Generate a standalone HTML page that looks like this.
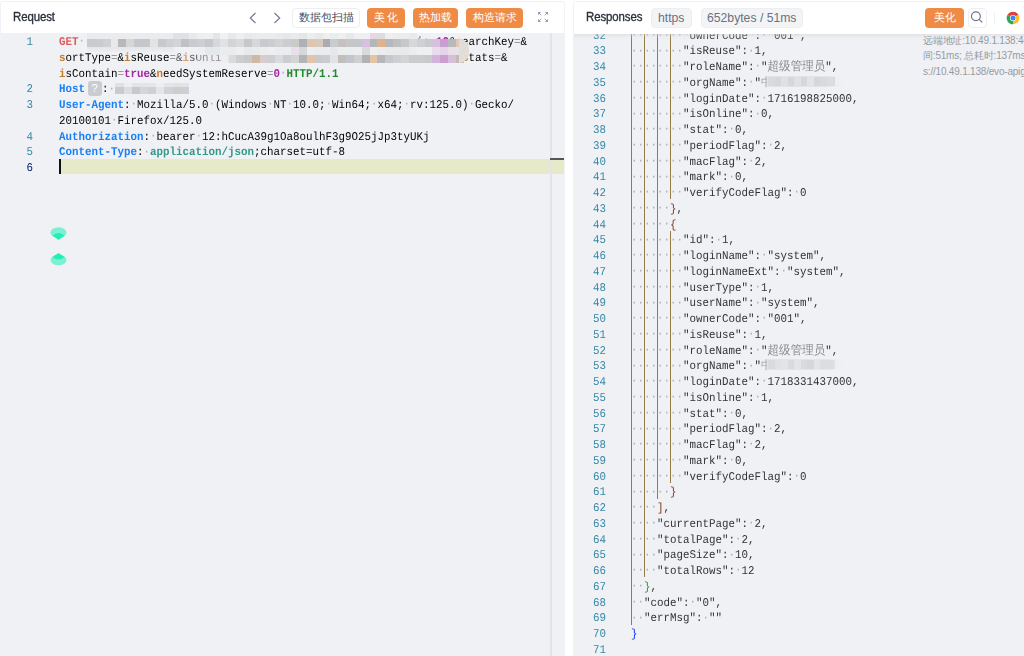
<!DOCTYPE html>
<html><head><meta charset="utf-8"><style>
*{box-sizing:border-box;margin:0;padding:0}
html,body{width:1024px;height:656px;overflow:hidden;background:#fff}
body{position:relative;font-family:"Liberation Sans",sans-serif}
.abs{position:absolute}
.mono{text-rendering:geometricPrecision;font-family:"Liberation Mono",monospace;font-size:11.8px;line-height:15.75px;white-space:pre}
.row{position:absolute;height:15.75px;transform:scaleX(0.9179);transform-origin:0 0}
.row span,.row{}
.txt{position:relative;top:2.5px}
.ln{position:absolute;height:15.75px;width:60px;text-align:right;color:#3688a7;transform:scaleX(0.9179);transform-origin:100% 0}
.d{color:#a9aab0;position:relative;top:-0.8px}
.b{font-weight:bold}
.eq{color:#7d7d80}
.title{position:absolute;font-size:12.7px;line-height:16px;color:#2a303c;letter-spacing:-0.1px;-webkit-text-stroke:0.35px #2a303c;transform:scaleX(0.9);transform-origin:0 0;white-space:nowrap}
.btn{position:absolute;top:8px;height:19.5px;border-radius:4px;background:#ef8b45;color:#fff;font-size:11.2px;line-height:19.5px;text-align:center;white-space:nowrap}
.btnw{position:absolute;top:8px;height:19.5px;border-radius:4px;background:#fff;border:1px solid #eceef2;color:#4a4f5a;font-size:10.8px;line-height:17.5px;text-align:center;white-space:nowrap}
.tag{position:absolute;top:8px;height:19.5px;border-radius:4px;background:#f3f4f6;border:1px solid #eceef1;color:#6b7083;font-size:12.2px;line-height:19.5px;text-align:center;white-space:nowrap}
.guide{position:absolute;width:1.5px;background:#957b45}
.mz{position:absolute}
.cjk{color:#8a8a8a;font-family:"Liberation Serif",serif;font-size:12.55px;line-height:1px}
</style></head>
<body>
<div class="abs" style="left:0;top:1px;width:565px;height:700px;border:1px solid #f1f2f5;border-radius:3px;background:#fff"></div><div class="abs" style="left:1px;top:33px;width:563px;height:640px;background:#f0f1f5"></div><div class="abs" style="left:572.5px;top:1px;width:470px;height:700px;border:1px solid #f1f2f5;border-radius:3px;background:#fff"></div><div class="abs" style="left:573.5px;top:33px;width:460px;height:640px;background:#f0f1f5"></div><div class="title" style="left:13px;top:9px">Request</div><svg class="abs" style="left:248px;top:10.6px" width="10" height="14" viewBox="0 0 10 14"><path d="M7.5 2 L2.3 7 L7.5 12" fill="none" stroke="#747a94" stroke-width="1.2"/></svg><svg class="abs" style="left:272px;top:10.6px" width="10" height="14" viewBox="0 0 10 14"><path d="M2.5 2 L7.7 7 L2.5 12" fill="none" stroke="#747a94" stroke-width="1.2"/></svg><div class="btnw" style="left:292px;width:68px">数据包扫描</div><div class="btn" style="left:367px;width:38px;letter-spacing:2.5px;text-indent:2.5px">美化</div><div class="btn" style="left:413px;width:45px">热加载</div><div class="btn" style="left:466px;width:57px">构造请求</div><svg class="abs" style="left:537px;top:11px" width="12" height="12" viewBox="0 0 12 12" fill="#979db0" stroke="#979db0" stroke-width="0.9"><path d="M1 1h3L1 4z M11 1H8l3 3z M1 11h3L1 8z M11 11H8l3-3z" stroke="none"/><path d="M2 2l2.3 2.3M10 2L7.7 4.3M2 10l2.3-2.3M10 10L7.7 7.7"/></svg><div class="abs" style="left:60.5px;top:158.60px;width:503px;height:15.75px;background:#e6eac9"></div><div class="abs" style="left:59px;top:158.60px;width:2px;height:15.75px;background:#111"></div><div class="abs" style="left:0;top:0;width:0;height:0"></div><div class="ln mono" style="left:-26.6px;top:32.60px"><span class="txt">1</span></div><div class="ln mono" style="left:-26.6px;top:79.85px"><span class="txt">2</span></div><div class="ln mono" style="left:-26.6px;top:95.60px"><span class="txt">3</span></div><div class="ln mono" style="left:-26.6px;top:127.10px"><span class="txt">4</span></div><div class="ln mono" style="left:-26.6px;top:142.85px"><span class="txt">5</span></div><div class="ln mono" style="left:-26.6px;top:158.60px;color:#0b216f"><span class="txt">6</span></div><div class="row mono" style="left:58.5px;top:32.60px"><span class="txt"><span class="b" style="color:#df5a5a">GET</span><span class="d">·</span>                                                   io<span class="eq">=</span><span class="b" style="color:#a526a4">10</span>&amp;<span class="b" style="color:#c97a1e">s</span>earchKey<span class="eq">=</span>&amp;</span></div><div class="row mono" style="left:58.5px;top:48.35px"><span class="txt"><span class="b" style="color:#c97a1e">s</span>ortType<span class="eq">=</span>&amp;<span class="b" style="color:#c97a1e">i</span>sReuse<span class="eq">=</span>&amp;<span class="b" style="color:#c97a1e">i</span>sOnli                                     <span class="b" style="color:#c97a1e">s</span>tats<span class="eq">=</span>&amp;</span></div><div class="row mono" style="left:58.5px;top:64.10px"><span class="txt"><span class="b" style="color:#c97a1e">i</span>sContain<span class="eq">=</span><span class="b" style="color:#a526a4">true</span>&amp;<span class="b" style="color:#c97a1e">n</span>eedSystemReserve<span class="eq">=</span><span class="b" style="color:#a526a4">0</span><span class="d">·</span><span class="b" style="color:#208a2c">HTTP/1.1</span></span></div><div class="row mono" style="left:58.5px;top:79.85px"><span class="txt"><span class="b" style="color:#1a7ff2">Host</span></span></div><div class="row mono" style="left:101.5px;top:79.85px"><span class="txt">:<span class="d">·</span></span></div><div class="row mono" style="left:58.5px;top:95.60px"><span class="txt"><span class="b" style="color:#1a7ff2">User-Agent</span>:<span class="d">·</span>Mozilla/5.0<span class="d">·</span>(Windows<span class="d">·</span>NT<span class="d">·</span>10.0;<span class="d">·</span>Win64;<span class="d">·</span>x64;<span class="d">·</span>rv:125.0)<span class="d">·</span>Gecko/</span></div><div class="row mono" style="left:58.5px;top:111.35px"><span class="txt">20100101<span class="d">·</span>Firefox/125.0</span></div><div class="row mono" style="left:58.5px;top:127.10px"><span class="txt"><span class="b" style="color:#1a7ff2">Authorization</span>:<span class="d">·</span>bearer<span class="d">·</span>12:hCucA39g1Oa8oulhF3g9O25jJp3tyUKj</span></div><div class="row mono" style="left:58.5px;top:142.85px"><span class="txt"><span class="b" style="color:#1a7ff2">Content-Type</span>:<span class="d">·</span><span class="b" style="color:#33978a">application/json</span>;charset=utf-8</span></div><div class="abs" style="left:0;top:0;width:1024px;height:656px;filter:blur(0.4px)"><div class="mz" style="left:87.00px;top:33.00px;width:8.00px;height:6.10px;background:#eaebee"></div><div class="mz" style="left:94.85px;top:33.00px;width:8.00px;height:6.10px;background:#eaebee"></div><div class="mz" style="left:102.70px;top:33.00px;width:8.00px;height:6.10px;background:#eaebee"></div><div class="mz" style="left:110.55px;top:33.00px;width:8.00px;height:6.10px;background:#eaebee"></div><div class="mz" style="left:118.40px;top:33.00px;width:8.00px;height:6.10px;background:#eaebee"></div><div class="mz" style="left:126.25px;top:33.00px;width:8.00px;height:6.10px;background:#eaebee"></div><div class="mz" style="left:134.10px;top:33.00px;width:8.00px;height:6.10px;background:#eaebee"></div><div class="mz" style="left:141.95px;top:33.00px;width:8.00px;height:6.10px;background:#eaebee"></div><div class="mz" style="left:149.80px;top:33.00px;width:8.00px;height:6.10px;background:#eaebee"></div><div class="mz" style="left:157.65px;top:33.00px;width:8.00px;height:6.10px;background:#eaebee"></div><div class="mz" style="left:165.50px;top:33.00px;width:8.00px;height:6.10px;background:#eaebee"></div><div class="mz" style="left:173.35px;top:33.00px;width:8.00px;height:6.10px;background:#e0e1e4"></div><div class="mz" style="left:181.20px;top:33.00px;width:8.00px;height:6.10px;background:#e0e1e4"></div><div class="mz" style="left:189.05px;top:33.00px;width:8.00px;height:6.10px;background:#e8e9eb"></div><div class="mz" style="left:196.90px;top:33.00px;width:8.00px;height:6.10px;background:#edeef0"></div><div class="mz" style="left:204.75px;top:33.00px;width:8.00px;height:6.10px;background:#eeeff1"></div><div class="mz" style="left:212.60px;top:33.00px;width:8.00px;height:6.10px;background:#e3e4e6"></div><div class="mz" style="left:220.45px;top:33.00px;width:8.00px;height:6.10px;background:#eef2f4"></div><div class="mz" style="left:228.30px;top:33.00px;width:8.00px;height:6.10px;background:#e7e8ea"></div><div class="mz" style="left:236.15px;top:33.00px;width:8.00px;height:6.10px;background:#eeeff1"></div><div class="mz" style="left:244.00px;top:33.00px;width:8.00px;height:6.10px;background:#e8e9eb"></div><div class="mz" style="left:251.85px;top:33.00px;width:8.00px;height:6.10px;background:#eaebed"></div><div class="mz" style="left:259.70px;top:33.00px;width:8.00px;height:6.10px;background:#ebecee"></div><div class="mz" style="left:267.55px;top:33.00px;width:8.00px;height:6.10px;background:#ebecee"></div><div class="mz" style="left:275.40px;top:33.00px;width:8.00px;height:6.10px;background:#e9eaec"></div><div class="mz" style="left:283.25px;top:33.00px;width:8.00px;height:6.10px;background:#e6e7ea"></div><div class="mz" style="left:291.10px;top:33.00px;width:8.00px;height:6.10px;background:#e9eaec"></div><div class="mz" style="left:298.95px;top:33.00px;width:8.00px;height:6.10px;background:#e5e6e8"></div><div class="mz" style="left:306.80px;top:33.00px;width:8.00px;height:6.10px;background:#eceded"></div><div class="mz" style="left:314.65px;top:33.00px;width:8.00px;height:6.10px;background:#e7e8ea"></div><div class="mz" style="left:322.50px;top:33.00px;width:8.00px;height:6.10px;background:#efeff0"></div><div class="mz" style="left:330.35px;top:33.00px;width:8.00px;height:6.10px;background:#ebecee"></div><div class="mz" style="left:338.20px;top:33.00px;width:8.00px;height:6.10px;background:#eeeff1"></div><div class="mz" style="left:346.05px;top:33.00px;width:8.00px;height:6.10px;background:#e7e8ea"></div><div class="mz" style="left:353.90px;top:33.00px;width:8.00px;height:6.10px;background:#eeeff1"></div><div class="mz" style="left:361.75px;top:33.00px;width:8.00px;height:6.10px;background:#eeeff1"></div><div class="mz" style="left:369.60px;top:33.00px;width:8.00px;height:6.10px;background:#e6d6e8"></div><div class="mz" style="left:377.45px;top:33.00px;width:8.00px;height:6.10px;background:#dcdddf"></div><div class="mz" style="left:385.30px;top:33.00px;width:8.00px;height:6.10px;background:#f0efed"></div><div class="mz" style="left:393.15px;top:33.00px;width:8.00px;height:6.10px;background:#ebecee"></div><div class="mz" style="left:401.00px;top:33.00px;width:8.00px;height:6.10px;background:#ebecee"></div><div class="mz" style="left:408.85px;top:33.00px;width:8.00px;height:6.10px;background:#e9eaec"></div><div class="mz" style="left:87.00px;top:39.10px;width:8.00px;height:7.85px;background:#c9cacd"></div><div class="mz" style="left:94.85px;top:39.10px;width:8.00px;height:7.85px;background:#cbcbce"></div><div class="mz" style="left:102.70px;top:39.10px;width:8.00px;height:7.85px;background:#cfd0d3"></div><div class="mz" style="left:110.55px;top:39.10px;width:8.00px;height:7.85px;background:#e6e8ea"></div><div class="mz" style="left:118.40px;top:39.10px;width:8.00px;height:7.85px;background:#b9b7b9"></div><div class="mz" style="left:126.25px;top:39.10px;width:8.00px;height:7.85px;background:#d5d7d6"></div><div class="mz" style="left:134.10px;top:39.10px;width:8.00px;height:7.85px;background:#c3c6ca"></div><div class="mz" style="left:141.95px;top:39.10px;width:8.00px;height:7.85px;background:#c5c8cb"></div><div class="mz" style="left:149.80px;top:39.10px;width:8.00px;height:7.85px;background:#e2e3e3"></div><div class="mz" style="left:157.65px;top:39.10px;width:8.00px;height:7.85px;background:#c7c9cc"></div><div class="mz" style="left:165.50px;top:39.10px;width:8.00px;height:7.85px;background:#ced0d3"></div><div class="mz" style="left:173.35px;top:39.10px;width:8.00px;height:7.85px;background:#d3d4d6"></div><div class="mz" style="left:181.20px;top:39.10px;width:8.00px;height:7.85px;background:#bfc1c5"></div><div class="mz" style="left:189.05px;top:39.10px;width:8.00px;height:7.85px;background:#c9cbce"></div><div class="mz" style="left:196.90px;top:39.10px;width:8.00px;height:7.85px;background:#cdced1"></div><div class="mz" style="left:204.75px;top:39.10px;width:8.00px;height:7.85px;background:#c4c7cc"></div><div class="mz" style="left:212.60px;top:39.10px;width:8.00px;height:7.85px;background:#d6d7d9"></div><div class="mz" style="left:220.45px;top:39.10px;width:8.00px;height:7.85px;background:#e0e3e6"></div><div class="mz" style="left:228.30px;top:39.10px;width:8.00px;height:7.85px;background:#d3d4d7"></div><div class="mz" style="left:236.15px;top:39.10px;width:8.00px;height:7.85px;background:#d9dbdb"></div><div class="mz" style="left:244.00px;top:39.10px;width:8.00px;height:7.85px;background:#c7c8ca"></div><div class="mz" style="left:251.85px;top:39.10px;width:8.00px;height:7.85px;background:#d6d7da"></div><div class="mz" style="left:259.70px;top:39.10px;width:8.00px;height:7.85px;background:#c8cace"></div><div class="mz" style="left:267.55px;top:39.10px;width:8.00px;height:7.85px;background:#cbcdd0"></div><div class="mz" style="left:275.40px;top:39.10px;width:8.00px;height:7.85px;background:#d2d3d5"></div><div class="mz" style="left:283.25px;top:39.10px;width:8.00px;height:7.85px;background:#cbcdd0"></div><div class="mz" style="left:291.10px;top:39.10px;width:8.00px;height:7.85px;background:#cbcac9"></div><div class="mz" style="left:298.95px;top:39.10px;width:8.00px;height:7.85px;background:#aeb0b8"></div><div class="mz" style="left:306.80px;top:39.10px;width:8.00px;height:7.85px;background:#dcc6b0"></div><div class="mz" style="left:314.65px;top:39.10px;width:8.00px;height:7.85px;background:#d8c9be"></div><div class="mz" style="left:322.50px;top:39.10px;width:8.00px;height:7.85px;background:#acacae"></div><div class="mz" style="left:330.35px;top:39.10px;width:8.00px;height:7.85px;background:#c8cbcf"></div><div class="mz" style="left:338.20px;top:39.10px;width:8.00px;height:7.85px;background:#c6c1bf"></div><div class="mz" style="left:346.05px;top:39.10px;width:8.00px;height:7.85px;background:#c5c7c9"></div><div class="mz" style="left:353.90px;top:39.10px;width:8.00px;height:7.85px;background:#c3c7ca"></div><div class="mz" style="left:361.75px;top:39.10px;width:8.00px;height:7.85px;background:#d7bfe0"></div><div class="mz" style="left:369.60px;top:39.10px;width:8.00px;height:7.85px;background:#b4b7b8"></div><div class="mz" style="left:377.45px;top:39.10px;width:8.00px;height:7.85px;background:#e0b38f"></div><div class="mz" style="left:385.30px;top:39.10px;width:8.00px;height:7.85px;background:#b7b8bb"></div><div class="mz" style="left:393.15px;top:39.10px;width:8.00px;height:7.85px;background:#bfc0c2"></div><div class="mz" style="left:401.00px;top:39.10px;width:8.00px;height:7.85px;background:#c6c9cc"></div><div class="mz" style="left:408.85px;top:39.10px;width:8.00px;height:7.85px;background:#d7d8da"></div><div class="mz" style="left:416.70px;top:39.10px;width:8.00px;height:7.85px;background:#cfd0d2"></div><div class="mz" style="left:424.55px;top:39.10px;width:8.00px;height:7.85px;background:#c9cacd"></div><div class="mz" style="left:432.40px;top:39.10px;width:8.00px;height:7.85px;background:#d7c0db"></div><div class="mz" style="left:440.25px;top:39.10px;width:8.00px;height:7.85px;background:#c89fd0"></div><div class="mz" style="left:448.10px;top:39.10px;width:8.00px;height:7.85px;background:#b8b9bb"></div><div class="mz" style="left:455.95px;top:39.10px;width:8.00px;height:7.85px;background:#dfc8b8"></div><div class="mz" style="left:196.90px;top:46.95px;width:8.00px;height:7.85px;background:#eeeff1"></div><div class="mz" style="left:204.75px;top:46.95px;width:8.00px;height:7.85px;background:#e5e7e9"></div><div class="mz" style="left:212.60px;top:46.95px;width:8.00px;height:7.85px;background:#e5e8ea"></div><div class="mz" style="left:220.45px;top:46.95px;width:8.00px;height:7.85px;background:#ebecee"></div><div class="mz" style="left:228.30px;top:46.95px;width:8.00px;height:7.85px;background:#ebecee"></div><div class="mz" style="left:236.15px;top:46.95px;width:8.00px;height:7.85px;background:#eeeff0"></div><div class="mz" style="left:244.00px;top:46.95px;width:8.00px;height:7.85px;background:#e8e9eb"></div><div class="mz" style="left:251.85px;top:46.95px;width:8.00px;height:7.85px;background:#e9eaec"></div><div class="mz" style="left:259.70px;top:46.95px;width:8.00px;height:7.85px;background:#ecedef"></div><div class="mz" style="left:267.55px;top:46.95px;width:8.00px;height:7.85px;background:#eeeff1"></div><div class="mz" style="left:275.40px;top:46.95px;width:8.00px;height:7.85px;background:#ebecef"></div><div class="mz" style="left:283.25px;top:46.95px;width:8.00px;height:7.85px;background:#ebecee"></div><div class="mz" style="left:291.10px;top:46.95px;width:8.00px;height:7.85px;background:#e9dfea"></div><div class="mz" style="left:298.95px;top:46.95px;width:8.00px;height:7.85px;background:#d6d7d9"></div><div class="mz" style="left:306.80px;top:46.95px;width:8.00px;height:7.85px;background:#eeeeee"></div><div class="mz" style="left:314.65px;top:46.95px;width:8.00px;height:7.85px;background:#ebecee"></div><div class="mz" style="left:322.50px;top:46.95px;width:8.00px;height:7.85px;background:#ebecee"></div><div class="mz" style="left:330.35px;top:46.95px;width:8.00px;height:7.85px;background:#e6e7ea"></div><div class="mz" style="left:338.20px;top:46.95px;width:8.00px;height:7.85px;background:#ecedef"></div><div class="mz" style="left:346.05px;top:46.95px;width:8.00px;height:7.85px;background:#ecedef"></div><div class="mz" style="left:353.90px;top:46.95px;width:8.00px;height:7.85px;background:#edeef0"></div><div class="mz" style="left:361.75px;top:46.95px;width:8.00px;height:7.85px;background:#d8dbdb"></div><div class="mz" style="left:369.60px;top:46.95px;width:8.00px;height:7.85px;background:#efefef"></div><div class="mz" style="left:377.45px;top:46.95px;width:8.00px;height:7.85px;background:#ebecee"></div><div class="mz" style="left:385.30px;top:46.95px;width:8.00px;height:7.85px;background:#eaebed"></div><div class="mz" style="left:393.15px;top:46.95px;width:8.00px;height:7.85px;background:#e9eaec"></div><div class="mz" style="left:401.00px;top:46.95px;width:8.00px;height:7.85px;background:#e8e9eb"></div><div class="mz" style="left:408.85px;top:46.95px;width:8.00px;height:7.85px;background:#ecedef"></div><div class="mz" style="left:416.70px;top:46.95px;width:8.00px;height:7.85px;background:#eeeff1"></div><div class="mz" style="left:424.55px;top:46.95px;width:8.00px;height:7.85px;background:#eeeff1"></div><div class="mz" style="left:432.40px;top:46.95px;width:8.00px;height:7.85px;background:#e9dcec"></div><div class="mz" style="left:440.25px;top:46.95px;width:8.00px;height:7.85px;background:#e6d5ea"></div><div class="mz" style="left:448.10px;top:46.95px;width:8.00px;height:7.85px;background:#ecdfea"></div><div class="mz" style="left:455.95px;top:46.95px;width:8.00px;height:7.85px;background:#e2e5e7"></div><div class="mz" style="left:228.30px;top:54.80px;width:8.00px;height:7.85px;background:#d9dadb"></div><div class="mz" style="left:236.15px;top:54.80px;width:8.00px;height:7.85px;background:#cdcdd0"></div><div class="mz" style="left:244.00px;top:54.80px;width:8.00px;height:7.85px;background:#c8c9cb"></div><div class="mz" style="left:251.85px;top:54.80px;width:8.00px;height:7.85px;background:#cdb9a4"></div><div class="mz" style="left:259.70px;top:54.80px;width:8.00px;height:7.85px;background:#d9cccc"></div><div class="mz" style="left:267.55px;top:54.80px;width:8.00px;height:7.85px;background:#ccced2"></div><div class="mz" style="left:275.40px;top:54.80px;width:8.00px;height:7.85px;background:#d9dadd"></div><div class="mz" style="left:283.25px;top:54.80px;width:8.00px;height:7.85px;background:#cbcdd0"></div><div class="mz" style="left:291.10px;top:54.80px;width:8.00px;height:7.85px;background:#d3d4d6"></div><div class="mz" style="left:298.95px;top:54.80px;width:8.00px;height:7.85px;background:#b3b4b6"></div><div class="mz" style="left:306.80px;top:54.80px;width:8.00px;height:7.85px;background:#e2c3ab"></div><div class="mz" style="left:314.65px;top:54.80px;width:8.00px;height:7.85px;background:#c8cace"></div><div class="mz" style="left:322.50px;top:54.80px;width:8.00px;height:7.85px;background:#cbcccf"></div><div class="mz" style="left:330.35px;top:54.80px;width:8.00px;height:7.85px;background:#e2e3e6"></div><div class="mz" style="left:338.20px;top:54.80px;width:8.00px;height:7.85px;background:#c2bebb"></div><div class="mz" style="left:346.05px;top:54.80px;width:8.00px;height:7.85px;background:#c2c6cc"></div><div class="mz" style="left:353.90px;top:54.80px;width:8.00px;height:7.85px;background:#cfd0d2"></div><div class="mz" style="left:361.75px;top:54.80px;width:8.00px;height:7.85px;background:#b1b2b4"></div><div class="mz" style="left:369.60px;top:54.80px;width:8.00px;height:7.85px;background:#e3c5a6"></div><div class="mz" style="left:377.45px;top:54.80px;width:8.00px;height:7.85px;background:#b6b6bc"></div><div class="mz" style="left:385.30px;top:54.80px;width:8.00px;height:7.85px;background:#c6c8cb"></div><div class="mz" style="left:393.15px;top:54.80px;width:8.00px;height:7.85px;background:#cdd0d2"></div><div class="mz" style="left:401.00px;top:54.80px;width:8.00px;height:7.85px;background:#d3d4d6"></div><div class="mz" style="left:408.85px;top:54.80px;width:8.00px;height:7.85px;background:#cbcccf"></div><div class="mz" style="left:416.70px;top:54.80px;width:8.00px;height:7.85px;background:#cbccce"></div><div class="mz" style="left:424.55px;top:54.80px;width:8.00px;height:7.85px;background:#c8cacd"></div><div class="mz" style="left:432.40px;top:54.80px;width:8.00px;height:7.85px;background:#d2b4d8"></div><div class="mz" style="left:440.25px;top:54.80px;width:8.00px;height:7.85px;background:#c9a0d0"></div><div class="mz" style="left:448.10px;top:54.80px;width:8.00px;height:7.85px;background:#d6bfd8"></div><div class="mz" style="left:455.95px;top:54.80px;width:8.00px;height:7.85px;background:#c4bcb4"></div><div class="mz" style="left:87px;top:46.95px;width:87px;height:5px;background:linear-gradient(180deg,#e4e5e8,#eceef1);border-radius:0 0 0 30px"></div><div class="mz" style="left:175px;top:52px;width:22px;height:10.6px;background:rgba(236,237,240,0.35)"></div><div class="mz" style="left:197px;top:54.8px;width:32px;height:7.85px;background:rgba(236,237,240,0.6)"></div><div class="mz" style="left:459px;top:39.1px;width:10px;height:23.5px;border-radius:0 12px 12px 0;background:#e3ddd8"></div></div><div class="abs" style="left:87.5px;top:80.5px;width:14px;height:15.5px;border-radius:3px;background:#cbccd0;color:#fff;font-size:11px;line-height:15.5px;text-align:center">?</div><div class="mz" style="left:115.40px;top:82.7px;width:8.6px;height:4.3px;background:#dfe2e3"></div><div class="mz" style="left:115.40px;top:86.6px;width:8.6px;height:7.5px;background:#c8cbce"></div><div class="mz" style="left:123.58px;top:82.7px;width:8.6px;height:4.3px;background:#eceef0"></div><div class="mz" style="left:123.58px;top:86.6px;width:8.6px;height:7.5px;background:#dcdde0"></div><div class="mz" style="left:131.76px;top:82.7px;width:8.6px;height:4.3px;background:#e2e3e5"></div><div class="mz" style="left:131.76px;top:86.6px;width:8.6px;height:7.5px;background:#c9c9cb"></div><div class="mz" style="left:139.93px;top:82.7px;width:8.6px;height:4.3px;background:#e3e4e6"></div><div class="mz" style="left:139.93px;top:86.6px;width:8.6px;height:7.5px;background:#d3d5d7"></div><div class="mz" style="left:148.11px;top:82.7px;width:8.6px;height:4.3px;background:#e4e5e7"></div><div class="mz" style="left:148.11px;top:86.6px;width:8.6px;height:7.5px;background:#d0cfd3"></div><div class="mz" style="left:156.29px;top:82.7px;width:8.6px;height:4.3px;background:#eceef0"></div><div class="mz" style="left:156.29px;top:86.6px;width:8.6px;height:7.5px;background:#e3e5e7"></div><div class="mz" style="left:164.47px;top:82.7px;width:8.6px;height:4.3px;background:#e4e5e7"></div><div class="mz" style="left:164.47px;top:86.6px;width:8.6px;height:7.5px;background:#d1d2d5"></div><div class="mz" style="left:172.64px;top:82.7px;width:8.6px;height:4.3px;background:#e1e2e4"></div><div class="mz" style="left:172.64px;top:86.6px;width:8.6px;height:7.5px;background:#cfcdcb"></div><div class="mz" style="left:180.82px;top:82.7px;width:8.6px;height:4.3px;background:#e2e3e5"></div><div class="mz" style="left:180.82px;top:86.6px;width:8.6px;height:7.5px;background:#cdd0d3"></div><div class="abs" style="left:550px;top:33px;width:1.5px;height:630px;background:#e3e4e8"></div><div class="abs" style="left:550px;top:157.5px;width:14px;height:2px;background:#555"></div><svg class="abs" style="left:50px;top:226px" width="18" height="41" viewBox="0 0 18 41"><ellipse cx="8.5" cy="6.5" rx="8" ry="5.3" fill="#79f1d2"/><path d="M2.5 9.5 Q8.5 4.5 14.5 9.5 L8.5 14 Z" fill="#22eeb5"/><ellipse cx="8.5" cy="34" rx="8" ry="5.3" fill="#79f1d2"/><path d="M2.5 31 Q8.5 36 14.5 31 L8.5 27 Z" fill="#22eeb5"/></svg><div class="ln mono" style="left:545.8px;top:26.10px"><span class="txt">32</span></div><div class="row mono" style="left:631.0px;top:26.10px"><span class="txt"><span style="color:#333"><span class="d">·</span><span class="d">·</span><span class="d">·</span><span class="d">·</span><span class="d">·</span><span class="d">·</span><span class="d">·</span><span class="d">·</span>&quot;ownerCode&quot;:<span class="d">·</span>&quot;001&quot;,</span></span></div><div class="ln mono" style="left:545.8px;top:41.85px"><span class="txt">33</span></div><div class="row mono" style="left:631.0px;top:41.85px"><span class="txt"><span style="color:#333"><span class="d">·</span><span class="d">·</span><span class="d">·</span><span class="d">·</span><span class="d">·</span><span class="d">·</span><span class="d">·</span><span class="d">·</span>&quot;isReuse&quot;:<span class="d">·</span>1,</span></span></div><div class="ln mono" style="left:545.8px;top:57.60px"><span class="txt">34</span></div><div class="row mono" style="left:631.0px;top:57.60px"><span class="txt"><span style="color:#333"><span class="d">·</span><span class="d">·</span><span class="d">·</span><span class="d">·</span><span class="d">·</span><span class="d">·</span><span class="d">·</span><span class="d">·</span>&quot;roleName&quot;:<span class="d">·</span>&quot;<span class="cjk">超</span><span class="cjk">级</span><span class="cjk">管</span><span class="cjk">理</span><span class="cjk">员</span>&quot;,</span></span></div><div class="ln mono" style="left:545.8px;top:73.35px"><span class="txt">35</span></div><div class="row mono" style="left:631.0px;top:73.35px"><span class="txt"><span style="color:#333"><span class="d">·</span><span class="d">·</span><span class="d">·</span><span class="d">·</span><span class="d">·</span><span class="d">·</span><span class="d">·</span><span class="d">·</span>&quot;orgName&quot;:<span class="d">·</span>&quot;<span style="color:#a0a0a0">中</span></span></span></div><div class="ln mono" style="left:545.8px;top:89.10px"><span class="txt">36</span></div><div class="row mono" style="left:631.0px;top:89.10px"><span class="txt"><span style="color:#333"><span class="d">·</span><span class="d">·</span><span class="d">·</span><span class="d">·</span><span class="d">·</span><span class="d">·</span><span class="d">·</span><span class="d">·</span>&quot;loginDate&quot;:<span class="d">·</span>1716198825000,</span></span></div><div class="ln mono" style="left:545.8px;top:104.85px"><span class="txt">37</span></div><div class="row mono" style="left:631.0px;top:104.85px"><span class="txt"><span style="color:#333"><span class="d">·</span><span class="d">·</span><span class="d">·</span><span class="d">·</span><span class="d">·</span><span class="d">·</span><span class="d">·</span><span class="d">·</span>&quot;isOnline&quot;:<span class="d">·</span>0,</span></span></div><div class="ln mono" style="left:545.8px;top:120.60px"><span class="txt">38</span></div><div class="row mono" style="left:631.0px;top:120.60px"><span class="txt"><span style="color:#333"><span class="d">·</span><span class="d">·</span><span class="d">·</span><span class="d">·</span><span class="d">·</span><span class="d">·</span><span class="d">·</span><span class="d">·</span>&quot;stat&quot;:<span class="d">·</span>0,</span></span></div><div class="ln mono" style="left:545.8px;top:136.35px"><span class="txt">39</span></div><div class="row mono" style="left:631.0px;top:136.35px"><span class="txt"><span style="color:#333"><span class="d">·</span><span class="d">·</span><span class="d">·</span><span class="d">·</span><span class="d">·</span><span class="d">·</span><span class="d">·</span><span class="d">·</span>&quot;periodFlag&quot;:<span class="d">·</span>2,</span></span></div><div class="ln mono" style="left:545.8px;top:152.10px"><span class="txt">40</span></div><div class="row mono" style="left:631.0px;top:152.10px"><span class="txt"><span style="color:#333"><span class="d">·</span><span class="d">·</span><span class="d">·</span><span class="d">·</span><span class="d">·</span><span class="d">·</span><span class="d">·</span><span class="d">·</span>&quot;macFlag&quot;:<span class="d">·</span>2,</span></span></div><div class="ln mono" style="left:545.8px;top:167.85px"><span class="txt">41</span></div><div class="row mono" style="left:631.0px;top:167.85px"><span class="txt"><span style="color:#333"><span class="d">·</span><span class="d">·</span><span class="d">·</span><span class="d">·</span><span class="d">·</span><span class="d">·</span><span class="d">·</span><span class="d">·</span>&quot;mark&quot;:<span class="d">·</span>0,</span></span></div><div class="ln mono" style="left:545.8px;top:183.60px"><span class="txt">42</span></div><div class="row mono" style="left:631.0px;top:183.60px"><span class="txt"><span style="color:#333"><span class="d">·</span><span class="d">·</span><span class="d">·</span><span class="d">·</span><span class="d">·</span><span class="d">·</span><span class="d">·</span><span class="d">·</span>&quot;verifyCodeFlag&quot;:<span class="d">·</span>0</span></span></div><div class="ln mono" style="left:545.8px;top:199.35px"><span class="txt">43</span></div><div class="row mono" style="left:631.0px;top:199.35px"><span class="txt"><span style="color:#333"><span class="d">·</span><span class="d">·</span><span class="d">·</span><span class="d">·</span><span class="d">·</span><span class="d">·</span><span style="color:#7b3814">}</span>,</span></span></div><div class="ln mono" style="left:545.8px;top:215.10px"><span class="txt">44</span></div><div class="row mono" style="left:631.0px;top:215.10px"><span class="txt"><span style="color:#333"><span class="d">·</span><span class="d">·</span><span class="d">·</span><span class="d">·</span><span class="d">·</span><span class="d">·</span><span style="color:#7b3814">{</span></span></span></div><div class="ln mono" style="left:545.8px;top:230.85px"><span class="txt">45</span></div><div class="row mono" style="left:631.0px;top:230.85px"><span class="txt"><span style="color:#333"><span class="d">·</span><span class="d">·</span><span class="d">·</span><span class="d">·</span><span class="d">·</span><span class="d">·</span><span class="d">·</span><span class="d">·</span>&quot;id&quot;:<span class="d">·</span>1,</span></span></div><div class="ln mono" style="left:545.8px;top:246.60px"><span class="txt">46</span></div><div class="row mono" style="left:631.0px;top:246.60px"><span class="txt"><span style="color:#333"><span class="d">·</span><span class="d">·</span><span class="d">·</span><span class="d">·</span><span class="d">·</span><span class="d">·</span><span class="d">·</span><span class="d">·</span>&quot;loginName&quot;:<span class="d">·</span>&quot;system&quot;,</span></span></div><div class="ln mono" style="left:545.8px;top:262.35px"><span class="txt">47</span></div><div class="row mono" style="left:631.0px;top:262.35px"><span class="txt"><span style="color:#333"><span class="d">·</span><span class="d">·</span><span class="d">·</span><span class="d">·</span><span class="d">·</span><span class="d">·</span><span class="d">·</span><span class="d">·</span>&quot;loginNameExt&quot;:<span class="d">·</span>&quot;system&quot;,</span></span></div><div class="ln mono" style="left:545.8px;top:278.10px"><span class="txt">48</span></div><div class="row mono" style="left:631.0px;top:278.10px"><span class="txt"><span style="color:#333"><span class="d">·</span><span class="d">·</span><span class="d">·</span><span class="d">·</span><span class="d">·</span><span class="d">·</span><span class="d">·</span><span class="d">·</span>&quot;userType&quot;:<span class="d">·</span>1,</span></span></div><div class="ln mono" style="left:545.8px;top:293.85px"><span class="txt">49</span></div><div class="row mono" style="left:631.0px;top:293.85px"><span class="txt"><span style="color:#333"><span class="d">·</span><span class="d">·</span><span class="d">·</span><span class="d">·</span><span class="d">·</span><span class="d">·</span><span class="d">·</span><span class="d">·</span>&quot;userName&quot;:<span class="d">·</span>&quot;system&quot;,</span></span></div><div class="ln mono" style="left:545.8px;top:309.60px"><span class="txt">50</span></div><div class="row mono" style="left:631.0px;top:309.60px"><span class="txt"><span style="color:#333"><span class="d">·</span><span class="d">·</span><span class="d">·</span><span class="d">·</span><span class="d">·</span><span class="d">·</span><span class="d">·</span><span class="d">·</span>&quot;ownerCode&quot;:<span class="d">·</span>&quot;001&quot;,</span></span></div><div class="ln mono" style="left:545.8px;top:325.35px"><span class="txt">51</span></div><div class="row mono" style="left:631.0px;top:325.35px"><span class="txt"><span style="color:#333"><span class="d">·</span><span class="d">·</span><span class="d">·</span><span class="d">·</span><span class="d">·</span><span class="d">·</span><span class="d">·</span><span class="d">·</span>&quot;isReuse&quot;:<span class="d">·</span>1,</span></span></div><div class="ln mono" style="left:545.8px;top:341.10px"><span class="txt">52</span></div><div class="row mono" style="left:631.0px;top:341.10px"><span class="txt"><span style="color:#333"><span class="d">·</span><span class="d">·</span><span class="d">·</span><span class="d">·</span><span class="d">·</span><span class="d">·</span><span class="d">·</span><span class="d">·</span>&quot;roleName&quot;:<span class="d">·</span>&quot;<span class="cjk">超</span><span class="cjk">级</span><span class="cjk">管</span><span class="cjk">理</span><span class="cjk">员</span>&quot;,</span></span></div><div class="ln mono" style="left:545.8px;top:356.85px"><span class="txt">53</span></div><div class="row mono" style="left:631.0px;top:356.85px"><span class="txt"><span style="color:#333"><span class="d">·</span><span class="d">·</span><span class="d">·</span><span class="d">·</span><span class="d">·</span><span class="d">·</span><span class="d">·</span><span class="d">·</span>&quot;orgName&quot;:<span class="d">·</span>&quot;<span style="color:#a0a0a0">中</span></span></span></div><div class="ln mono" style="left:545.8px;top:372.60px"><span class="txt">54</span></div><div class="row mono" style="left:631.0px;top:372.60px"><span class="txt"><span style="color:#333"><span class="d">·</span><span class="d">·</span><span class="d">·</span><span class="d">·</span><span class="d">·</span><span class="d">·</span><span class="d">·</span><span class="d">·</span>&quot;loginDate&quot;:<span class="d">·</span>1718331437000,</span></span></div><div class="ln mono" style="left:545.8px;top:388.35px"><span class="txt">55</span></div><div class="row mono" style="left:631.0px;top:388.35px"><span class="txt"><span style="color:#333"><span class="d">·</span><span class="d">·</span><span class="d">·</span><span class="d">·</span><span class="d">·</span><span class="d">·</span><span class="d">·</span><span class="d">·</span>&quot;isOnline&quot;:<span class="d">·</span>1,</span></span></div><div class="ln mono" style="left:545.8px;top:404.10px"><span class="txt">56</span></div><div class="row mono" style="left:631.0px;top:404.10px"><span class="txt"><span style="color:#333"><span class="d">·</span><span class="d">·</span><span class="d">·</span><span class="d">·</span><span class="d">·</span><span class="d">·</span><span class="d">·</span><span class="d">·</span>&quot;stat&quot;:<span class="d">·</span>0,</span></span></div><div class="ln mono" style="left:545.8px;top:419.85px"><span class="txt">57</span></div><div class="row mono" style="left:631.0px;top:419.85px"><span class="txt"><span style="color:#333"><span class="d">·</span><span class="d">·</span><span class="d">·</span><span class="d">·</span><span class="d">·</span><span class="d">·</span><span class="d">·</span><span class="d">·</span>&quot;periodFlag&quot;:<span class="d">·</span>2,</span></span></div><div class="ln mono" style="left:545.8px;top:435.60px"><span class="txt">58</span></div><div class="row mono" style="left:631.0px;top:435.60px"><span class="txt"><span style="color:#333"><span class="d">·</span><span class="d">·</span><span class="d">·</span><span class="d">·</span><span class="d">·</span><span class="d">·</span><span class="d">·</span><span class="d">·</span>&quot;macFlag&quot;:<span class="d">·</span>2,</span></span></div><div class="ln mono" style="left:545.8px;top:451.35px"><span class="txt">59</span></div><div class="row mono" style="left:631.0px;top:451.35px"><span class="txt"><span style="color:#333"><span class="d">·</span><span class="d">·</span><span class="d">·</span><span class="d">·</span><span class="d">·</span><span class="d">·</span><span class="d">·</span><span class="d">·</span>&quot;mark&quot;:<span class="d">·</span>0,</span></span></div><div class="ln mono" style="left:545.8px;top:467.10px"><span class="txt">60</span></div><div class="row mono" style="left:631.0px;top:467.10px"><span class="txt"><span style="color:#333"><span class="d">·</span><span class="d">·</span><span class="d">·</span><span class="d">·</span><span class="d">·</span><span class="d">·</span><span class="d">·</span><span class="d">·</span>&quot;verifyCodeFlag&quot;:<span class="d">·</span>0</span></span></div><div class="ln mono" style="left:545.8px;top:482.85px"><span class="txt">61</span></div><div class="row mono" style="left:631.0px;top:482.85px"><span class="txt"><span style="color:#333"><span class="d">·</span><span class="d">·</span><span class="d">·</span><span class="d">·</span><span class="d">·</span><span class="d">·</span><span style="color:#7b3814">}</span></span></span></div><div class="ln mono" style="left:545.8px;top:498.60px"><span class="txt">62</span></div><div class="row mono" style="left:631.0px;top:498.60px"><span class="txt"><span style="color:#333"><span class="d">·</span><span class="d">·</span><span class="d">·</span><span class="d">·</span><span style="color:#7b3814">]</span>,</span></span></div><div class="ln mono" style="left:545.8px;top:514.35px"><span class="txt">63</span></div><div class="row mono" style="left:631.0px;top:514.35px"><span class="txt"><span style="color:#333"><span class="d">·</span><span class="d">·</span><span class="d">·</span><span class="d">·</span>&quot;currentPage&quot;:<span class="d">·</span>2,</span></span></div><div class="ln mono" style="left:545.8px;top:530.10px"><span class="txt">64</span></div><div class="row mono" style="left:631.0px;top:530.10px"><span class="txt"><span style="color:#333"><span class="d">·</span><span class="d">·</span><span class="d">·</span><span class="d">·</span>&quot;totalPage&quot;:<span class="d">·</span>2,</span></span></div><div class="ln mono" style="left:545.8px;top:545.85px"><span class="txt">65</span></div><div class="row mono" style="left:631.0px;top:545.85px"><span class="txt"><span style="color:#333"><span class="d">·</span><span class="d">·</span><span class="d">·</span><span class="d">·</span>&quot;pageSize&quot;:<span class="d">·</span>10,</span></span></div><div class="ln mono" style="left:545.8px;top:561.60px"><span class="txt">66</span></div><div class="row mono" style="left:631.0px;top:561.60px"><span class="txt"><span style="color:#333"><span class="d">·</span><span class="d">·</span><span class="d">·</span><span class="d">·</span>&quot;totalRows&quot;:<span class="d">·</span>12</span></span></div><div class="ln mono" style="left:545.8px;top:577.35px"><span class="txt">67</span></div><div class="row mono" style="left:631.0px;top:577.35px"><span class="txt"><span style="color:#333"><span class="d">·</span><span class="d">·</span><span style="color:#319331">}</span>,</span></span></div><div class="ln mono" style="left:545.8px;top:593.10px"><span class="txt">68</span></div><div class="row mono" style="left:631.0px;top:593.10px"><span class="txt"><span style="color:#333"><span class="d">·</span><span class="d">·</span>&quot;code&quot;:<span class="d">·</span>&quot;0&quot;,</span></span></div><div class="ln mono" style="left:545.8px;top:608.85px"><span class="txt">69</span></div><div class="row mono" style="left:631.0px;top:608.85px"><span class="txt"><span style="color:#333"><span class="d">·</span><span class="d">·</span>&quot;errMsg&quot;:<span class="d">·</span>&quot;&quot;</span></span></div><div class="ln mono" style="left:545.8px;top:624.60px"><span class="txt">70</span></div><div class="row mono" style="left:631.0px;top:624.60px"><span class="txt"><span style="color:#333"><span style="color:#0431fa">}</span></span></span></div><div class="ln mono" style="left:545.8px;top:640.35px"><span class="txt">71</span></div><div class="row mono" style="left:631.0px;top:640.35px"><span class="txt"><span style="color:#333"></span></span></div><div class="guide" style="left:630.80px;top:33.00px;height:591.60px"></div><div class="guide" style="left:643.80px;top:33.00px;height:544.35px"></div><div class="guide" style="left:656.80px;top:33.00px;height:465.60px"></div><div class="guide" style="left:669.80px;top:33.00px;height:166.35px"></div><div class="guide" style="left:669.80px;top:230.85px;height:252.00px"></div><div class="abs" style="left:767px;top:75.85px;width:78px;height:11px;background:linear-gradient(90deg,#e2e3e6 0,#e4e5e8 78%,rgba(236,237,240,0.6) 88%,rgba(240,241,245,0) 100%)"></div><div class="mz" style="left:768.00px;top:76.85px;width:6.80px;height:9px;background:#d9dadd"></div><div class="mz" style="left:774.50px;top:76.85px;width:6.80px;height:9px;background:#d6d7db"></div><div class="mz" style="left:781.00px;top:76.85px;width:6.80px;height:9px;background:#e0e1e4"></div><div class="mz" style="left:787.50px;top:76.85px;width:6.80px;height:9px;background:#d6d7db"></div><div class="mz" style="left:794.00px;top:76.85px;width:6.80px;height:9px;background:#e0e1e4"></div><div class="mz" style="left:800.50px;top:76.85px;width:6.80px;height:9px;background:#d6d7db"></div><div class="mz" style="left:807.00px;top:76.85px;width:6.80px;height:9px;background:#e3e4e7"></div><div class="mz" style="left:813.50px;top:76.85px;width:6.80px;height:9px;background:#d6d7db"></div><div class="mz" style="left:820.00px;top:76.85px;width:6.80px;height:9px;background:#d9dadd"></div><div class="mz" style="left:826.50px;top:76.85px;width:6.80px;height:9px;background:#dcdde0"></div><div class="mz" style="left:833.00px;top:76.85px;width:2.30px;height:9px;background:#d9dadd"></div><div class="abs" style="left:767px;top:359.35px;width:78px;height:11px;background:linear-gradient(90deg,#e2e3e6 0,#e4e5e8 78%,rgba(236,237,240,0.6) 88%,rgba(240,241,245,0) 100%)"></div><div class="mz" style="left:768.00px;top:360.35px;width:6.80px;height:9px;background:#d9dadd"></div><div class="mz" style="left:774.50px;top:360.35px;width:6.80px;height:9px;background:#e0e1e4"></div><div class="mz" style="left:781.00px;top:360.35px;width:6.80px;height:9px;background:#e3e4e7"></div><div class="mz" style="left:787.50px;top:360.35px;width:6.80px;height:9px;background:#d9dadd"></div><div class="mz" style="left:794.00px;top:360.35px;width:6.80px;height:9px;background:#e3e4e7"></div><div class="mz" style="left:800.50px;top:360.35px;width:6.80px;height:9px;background:#d9dadd"></div><div class="mz" style="left:807.00px;top:360.35px;width:6.80px;height:9px;background:#d6d7db"></div><div class="mz" style="left:813.50px;top:360.35px;width:6.80px;height:9px;background:#e3e4e7"></div><div class="mz" style="left:820.00px;top:360.35px;width:6.80px;height:9px;background:#dcdde0"></div><div class="mz" style="left:826.50px;top:360.35px;width:6.80px;height:9px;background:#dcdde0"></div><div class="mz" style="left:833.00px;top:360.35px;width:2.30px;height:9px;background:#e0e1e4"></div><div class="abs" style="left:573.5px;top:2px;width:460px;height:31.5px;background:#fff;border-top-left-radius:2px"></div><div class="title" style="left:585.5px;top:9px">Responses</div><div class="tag" style="left:651px;width:40.5px">https</div><div class="tag" style="left:701px;width:101.5px">652bytes / 51ms</div><div class="btn" style="left:925px;width:39px">美化</div><div class="btnw" style="left:967.5px;width:19px"></div><svg class="abs" style="left:968px;top:9px" width="16" height="16" viewBox="0 0 16 16" fill="none" stroke="#6d7288" stroke-width="1.15"><circle cx="7.9" cy="7.2" r="4.4"/><path d="M11.1 10.4L14.3 13.4"/></svg><div class="abs" style="left:994px;top:12.5px;width:1px;height:11.5px;background:#eef0f3"></div><svg class="abs" style="left:1005.8px;top:11px" width="14" height="14" viewBox="0 0 14 14"><path d="M7 7 L1.544 3.85 A6.3 6.3 0 0 1 12.456 3.85 Z" fill="#e0413a"/><path d="M7 7 L12.456 3.85 A6.3 6.3 0 0 1 7 13.3 Z" fill="#f9c020"/><path d="M7 7 L7 13.3 A6.3 6.3 0 0 1 1.544 3.85 Z" fill="#2fa651"/><circle cx="7" cy="7" r="3.1" fill="#fff"/><circle cx="7" cy="7" r="2.5" fill="#3f86f0"/></svg><div class="abs" style="left:573.5px;top:33.5px;width:460px;height:6px;box-shadow:inset 0 6px 6px -6px #d6d6d6"></div><div class="abs" style="left:923px;top:33px;font-size:10px;line-height:15.4px;color:#959aa2;letter-spacing:-0.2px;white-space:nowrap">远端地址:10.49.1.138:443<br>间:51ms; 总耗时:137ms<br>s://10.49.1.138/evo-apigw</div>
</body></html>
